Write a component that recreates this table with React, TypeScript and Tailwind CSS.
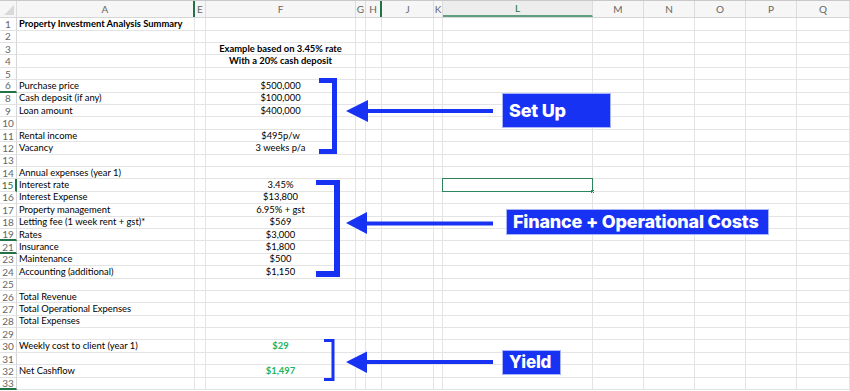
import React from "react";

const COLS = [
  { key: "A", w: 178 },
  { key: "E", w: 11 },
  { key: "F", w: 150 },
  { key: "G", w: 10 },
  { key: "H", w: 16 },
  { key: "J", w: 52 },
  { key: "K", w: 9 },
  { key: "L", w: 150 },
  { key: "M", w: 51 },
  { key: "N", w: 51 },
  { key: "O", w: 51 },
  { key: "P", w: 51 },
  { key: "Q", w: 53 },
];

type Row = {
  n: number;
  a?: string;
  f?: string;
  bold?: boolean;
  green?: boolean;
  hidden?: boolean; // a hidden row follows this one
};

const ROWS: Row[] = [
  { n: 1, a: "Property Investment Analysis Summary", bold: true },
  { n: 2 },
  { n: 3, f: "Example based on 3.45% rate", bold: true },
  { n: 4, f: "With a 20% cash deposit", bold: true },
  { n: 5 },
  { n: 6, a: "Purchase price", f: "$500,000", hidden: true },
  { n: 8, a: "Cash deposit (if any)", f: "$100,000" },
  { n: 9, a: "Loan amount", f: "$400,000" },
  { n: 10 },
  { n: 11, a: "Rental income", f: "$495p/w" },
  { n: 12, a: "Vacancy", f: "3 weeks p/a" },
  { n: 13 },
  { n: 14, a: "Annual expenses (year 1)" },
  { n: 15, a: "Interest rate", f: "3.45%" },
  { n: 16, a: "Interest Expense", f: "$13,800" },
  { n: 17, a: "Property management", f: "6.95% + gst" },
  { n: 18, a: "Letting fee (1 week rent + gst)*", f: "$569" },
  { n: 19, a: "Rates", f: "$3,000", hidden: true },
  { n: 21, a: "Insurance", f: "$1,800", hidden: true },
  { n: 23, a: "Maintenance", f: "$500" },
  { n: 24, a: "Accounting (additional)", f: "$1,150" },
  { n: 25 },
  { n: 26, a: "Total Revenue" },
  { n: 27, a: "Total Operational Expenses" },
  { n: 28, a: "Total Expenses" },
  { n: 29 },
  { n: 30, a: "Weekly cost to client (year 1)", f: "$29", green: true },
  { n: 31 },
  { n: 32, a: "Net Cashflow", f: "$1,497", green: true },
  { n: 33, hidden: true },
];

const Annotations = () => (
  <svg
    className="absolute inset-0 pointer-events-none"
    width={850}
    height={391}
    viewBox="0 0 850 391"
  >
    <g fill="#1832f4">
      {/* Set Up bracket + arrow */}
      <rect x={319} y={78} width={18} height={5} />
      <rect x={332} y={78} width={5} height={76} />
      <rect x={319} y={149} width={18} height={5} />
      <polygon points="346,111 368,100 368,122" />
      <rect x={366} y={109} width={127} height={4} />

      {/* Finance bracket + arrow */}
      <rect x={316} y={180} width={24} height={5} />
      <rect x={334} y={180} width={6} height={97} />
      <rect x={316} y={271} width={24} height={6} />
      <polygon points="346,223 367,212 367,234" />
      <rect x={365} y={221.5} width={128} height={4} />

      {/* Yield bracket + arrow */}
      <rect x={324} y={339} width={10} height={3} />
      <rect x={331.5} y={339} width={3} height={42} />
      <rect x={324} y={378} width={10} height={3} />
      <polygon points="346,362 367,351.5 367,373" />
      <rect x={365} y={360} width={128} height={4} />
    </g>
  </svg>
);

const Label = ({ text, className }: { text: string; className: string }) => (
  <div
    className={`absolute bg-[#1832f4] border border-[#a9b4fb] text-white font-extrabold flex items-center leading-none tracking-[-0.2px] ${className}`}
    style={{ fontFamily: "Inter, 'Liberation Sans', sans-serif" }}
  >
    {text}
  </div>
);

export default function App() {
  return (
    <div
      className="relative w-[850px] h-[391px] overflow-hidden bg-white text-[9.4px] text-black"
      style={{ fontFamily: "Lato, 'Open Sans', sans-serif" }}
    >
      {/* Column header */}
      <div className="flex h-[18.3px] bg-[#f6f6f6] border-t border-[#c9c9c9] border-b border-b-[#d6d6d6]">
        <div className="relative w-[17px] shrink-0 border-r border-[#dcdcdc]">
          <div className="absolute right-[2px] bottom-[2px] w-0 h-0 border-l-[10px] border-l-transparent border-b-[10px] border-b-[#d9d9d9]" />
        </div>
        {COLS.map((c) => (
          <div
            key={c.key}
            className={`shrink-0 flex items-center justify-center text-[10px] border-r ${
              c.key === "A" || c.key === "H" ? "border-r-[#217346] border-r-2" : "border-r-[#dcdcdc]"
            } ${c.key === "L" ? "text-[#217346] border-b-2 border-b-[#5f9e7e] bg-[#ededed]" : "text-[#666]"}`}
            style={{ width: c.w }}
          >
            {c.key}
          </div>
        ))}
      </div>

      {/* Rows */}
      {ROWS.map((r) => (
        <div key={r.n} className="flex h-[12.4px] leading-[12px]">
          <div
            className={`w-[17px] shrink-0 flex items-center justify-center text-[10px] border-r ${
              r.n === 15 ? "text-[#217346] border-r-2 border-r-[#217346]" : "text-[#666] border-r-[#d6d6d6]"
            } ${r.hidden ? "border-b-2 border-b-[#217346]" : "border-b border-b-[#e2e2e2]"}`}
          >
            {r.n}
          </div>
          {COLS.map((c) => (
            <div
              key={c.key}
              className={`relative shrink-0 flex items-center border-r border-b border-[#e4e4e4] whitespace-nowrap ${
                c.key === "F" ? "justify-center" : "justify-start pl-[2px]"
              } ${r.bold || (r.green && c.key === "F") ? "font-bold" : ""} ${
                r.green && c.key === "F" ? "text-[#22b463]" : ""
              }`}
              style={{ width: c.w }}
            >
              {c.key === "A" && r.a}
              {c.key === "F" && r.f}
              {c.key === "L" && r.n === 15 && (
                <div className="absolute -left-[1px] -top-[1px] w-[151px] h-[13.6px] border border-[#2f8459]">
                  <div className="absolute -right-[2px] -bottom-[2px] w-[3px] h-[3px] bg-[#2f8459]" />
                </div>
              )}
            </div>
          ))}
        </div>
      ))}

      <Annotations />
      <Label text="Set Up" className="left-[502px] top-[93px] w-[109px] h-[35px] pl-[6px] text-[18px]" />
      <Label
        text="Finance + Operational Costs"
        className="left-[506px] top-[209px] w-[263px] h-[26px] pl-[6px] text-[18px]"
      />
      <Label text="Yield" className="left-[502px] top-[350px] w-[59px] h-[25px] pl-[6px] text-[17px]" />
    </div>
  );
}
